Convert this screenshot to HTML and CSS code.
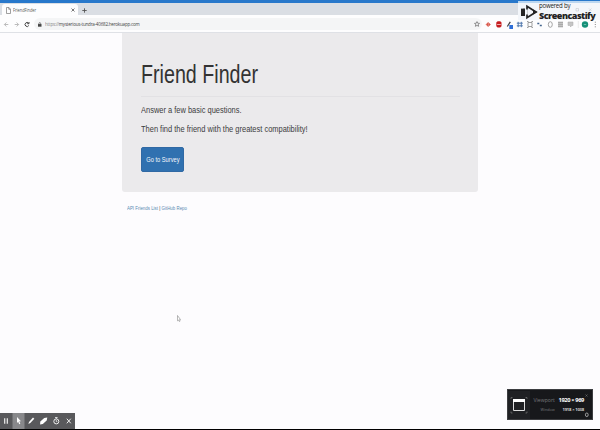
FILE: index.html
```html
<!DOCTYPE html>
<html lang="en">
<head>
<meta charset="utf-8">
<title>FriendFinder</title>
<link rel="stylesheet" href="styles.css">
</head>
<body>
<header class="browser">
  <div class="tabs">
    <div class="tab">
      <svg class="file" viewBox="0 0 5 7"><path d="M.5.5h2.400l1.600 1.700v4.300h-4zM2.800.5v1.800h1.700" /></svg>
      <span class="tab-title">FriendFinder</span>
      <svg class="close" viewBox="0 0 4 4"><path d="M.5.5l3 3m0-3l-3 3"/></svg>
    </div>
    <svg class="plus" viewBox="0 0 5 5"><path d="M2.500.3v4.400M.3 2.500h4.400"/></svg>
  </div>
  <div class="toolbar">
    <svg class="nav" viewBox="0 0 32 9">
      <path class="dim" d="M8.300 4.500H4.600m1.800-2l-2 2 2 2M14.700 4.500h3.700m-1.800-2l2 2-2 2"/>
      <path class="dark" d="M28.600 3.200a2 2 0 1 0 .2 2.300M29 2v1.700h-1.800"/>
    </svg>
    <div class="address">
      <svg class="lock" viewBox="0 0 4 5"><path d="M0 2h4v3H0z"/><path class="shackle" d="M1 2V1.200a1 .8 0 0 1 2 0V2"/></svg>
      <span class="url"><span class="scheme">https://</span>mysterious-tundra-40682.herokuapp.com</span>
      <svg class="star" viewBox="0 0 6 6"><path d="M3 .6l.7 1.600 1.800.2-1.300 1.100.4 1.800L3 4.400l-1.600.9.4-1.800L.5 2.400l1.800-.2z"/></svg>
    </div>
    <svg class="extensions" viewBox="0 0 118 12">
      <path d="M4 6.500l2-2v4zM8.500 6.500l-2-2v4z" fill="#d8564a" stroke="#d8564a" stroke-width=".4"/>
      <path d="M14.300 4.500l1.300-1.200h2.600l1.300 1.200v3.800l-1.300 1.200h-2.600l-1.300-1.200z" fill="#c51d20"/><path d="M15.100 6.500h3.700" stroke="#f2b3b3"/>
      <path d="M25.300 8.500l3-4.700" stroke="#444" stroke-width="1.300"/><path d="M27.300 7h3.700v4h-3.700z" fill="#2f6fd8"/>
      <path d="M36.200 3.800v5.400M39.300 3.800v5.400M34.800 5.200h6M34.800 7.800h6" stroke="#5279ad" fill="none"/>
      <path d="M46 4.500h4v4h-4zM45 3.500h1.500M49.500 3.500H51M45 9.500h1.500M49.500 9.500H51" stroke="#888" stroke-width=".8" fill="none"/>
      <path d="M55.300 5.500h2M57.800 7.500h2" stroke="#43648c" stroke-width="1.500"/>
      <ellipse cx="68.300" cy="6.500" rx="2" ry="2.800" stroke="#999" stroke-width=".9" fill="none"/>
      <path d="M76 3.700h5v5.600h-5z" fill="#aaa"/><path d="M76 5.500h5M76 7.500h5" stroke="#ddd" stroke-width=".5"/>
      <path d="M86 4h5v3.500h-2v1.500l-1.500-1.500H86z" fill="#c5c5c5" stroke="#aaa" stroke-width=".5"/>
      <path d="M96.300 3v7" stroke="#ddd" stroke-width=".6"/>
      <circle cx="103" cy="6.500" r="3.200" fill="#159078"/><path d="M101.800 6.500h2.400" stroke="#8ed2c5" stroke-width=".7"/>
      <path d="M113.300 3.700v1M113.300 6v1M113.300 8.300v1" stroke="#888"/>
    </svg>
  </div>
  <div class="watermark">
    <svg class="logo" viewBox="0 0 18 16"><path d="M1 4.500h4v7.500H1z" fill="#252525"/><path d="M7 2.300l9 5.700-9 5.700z" fill="none" stroke="#252525" stroke-width="1.700"/><path d="M0 3.300h3v1H0zM0 12.200h3v1H0zM6 5.500h1.800v5H6z" fill="#f3f6fa"/><path d="M13 5.500L17.500 8 13 10.500z" fill="#222"/></svg>
    <div class="brand"><span class="powered">powered by</span><span class="name">Screencastify</span></div>
    <svg class="window-controls" viewBox="0 0 18 4"><path d="M1 .5h2.500V3H1zM14 .5L16.500 3m0-2.500L14 3"/></svg>
  </div>
</header>
<main>
  <section class="jumbotron">
    <h1><span class="narrow">Friend Finder</span></h1>
    <hr>
    <p><span class="narrow">Answer a few basic questions.</span></p>
    <p><span class="narrow">Then find the friend with the greatest compatibility!</span></p>
    <a class="button"><span>Go to Survey</span></a>
  </section>
  <footer><span class="links"><a>API Friends List</a> | <a>GitHub Repo</a></span></footer>
</main>
<svg class="cursor" viewBox="0 0 4 7"><path d="M.5.5v5.300l1-.8.800 1.500.800-.4-.6-1.500h1z"/></svg>
<div class="recorder">
  <svg viewBox="0 0 75 16">
    <path d="M12.500 0h12v16h-12z" fill="#88888b"/>
    <path d="M4.700 5.300v5.400M7.300 5.300v5.400" stroke="#eee" stroke-width="1.200"/>
    <path d="M17 4l4 4.200-1.700.1 1 2.500-1.100.5-1-2.500L17 10z" fill="#fff"/>
    <path d="M28.400 10.900l.6-2 4-4.300 1.300 1.200-4 4.300z" fill="#fff"/>
    <path d="M40.300 8.500l4-3.500 3-.5-.6 3-3.900 3.500-2.700.5z" fill="#fff"/>
    <circle cx="56.300" cy="8.400" r="2.500" fill="none" stroke="#eee"/><path d="M55 4.500h2.600M56.300 4.500v1.500M56.300 7v1.600h1" fill="none" stroke="#eee" stroke-width=".8"/>
    <path d="M66.800 5.700l4 4.600m0-4.600l-4 4.600" stroke="#eee"/>
  </svg>
</div>
<div class="viewport">
  <div class="preview"><svg viewBox="0 0 22 28"><path d="M5.500 8.500h11v11h-11z" fill="none" stroke="#ddd"/><path d="M5 8h12v3H5z" fill="#fff"/><path d="M3 8V6.500h1.500M17.500 6.500H19V8M3 20.500V22h1.500M17.500 22H19v-1.500" fill="none" stroke="#777" stroke-width=".7"/></svg></div>
  <dl>
    <dt>Viewport</dt><dd>1920 × 969</dd>
    <dt class="small">Window</dt><dd class="small">1918 × 1038</dd>
  </dl>
  <svg class="controls" viewBox="0 0 6 28"><path d="M1.500 3.500l2 2m0-2l-2 2" stroke="#777" stroke-width=".6"/><ellipse cx="2.800" cy="23.800" rx="1.400" ry="1.800" stroke="#bbb" stroke-width=".8" fill="none"/></svg>
</div>
<div class="edge"></div>
</body>
</html>
```
FILE: styles.css
```css
* { box-sizing: border-box; }
body { margin: 0; width: 600px; height: 430px; overflow: hidden; position: relative; background: #fdfcfe; font-family: "Liberation Sans", Arial, sans-serif; color: #333; }
svg { display: block; flex: none; }
.browser { height: 33px; position: relative; border-bottom: 1px solid #dfe1e6; }
.tabs { height: 15px; padding-top: 4px; background: linear-gradient(#2878cb 3px, #dadee4 3px); display: flex; }
.tab { width: 76px; margin-left: 2px; height: 11px; background: #fdfdfe; border-radius: 3px 3px 0 0; display: flex; align-items: center; padding: 1px 3px 0 4px; }
.file { width: 5px; height: 7px; fill: none; stroke: #777; stroke-width: .7; }
.tab-title { font: 5px "Open Sans", sans-serif; margin-left: 2px; flex: 1; color: #555; white-space: nowrap; transform: scaleX(.78); transform-origin: left; }
.close { width: 4px; height: 4px; stroke: #555; stroke-width: .8; }
.plus { width: 5px; height: 5px; margin: 4px 0 0 4px; stroke: #555; stroke-width: .9; }
.toolbar { height: 17px; padding-top: 1px; display: flex; align-items: center; background: #fdfdfe; }
.nav { width: 32px; height: 9px; fill: none; stroke-width: .8; }
.dim { stroke: #aaa; }
.dark { stroke: #444; stroke-width: 1; }
.address { width: 448px; height: 12px; border-radius: 6px; margin-left: 2px; background: #f4f5f6; display: flex; align-items: center; padding: 0 2px 0 4px; }
.lock { width: 3.500px; height: 5px; fill: #444; }
.shackle { fill: none; stroke: #444; stroke-width: .7; }
.url { font: 5.500px "Open Sans", sans-serif; margin-left: 3px; flex: 1; color: #444; letter-spacing: -.25px; white-space: nowrap; transform: scaleX(.825); transform-origin: left; }
.scheme { color: #888; }
.star { width: 6px; height: 6px; fill: none; stroke: #666; stroke-width: .7; }
.extensions { width: 118px; height: 12px; }
.watermark { position: absolute; left: 518px; top: 1px; width: 82px; height: 19px; background: linear-gradient(#bcd7f0 2px, #f3f6fa 2px); display: flex; align-items: center; }
.logo { width: 18px; height: 16px; margin: 2px 0 0 2px; }
.brand { width: 58px; font-family: "Open Sans", sans-serif; margin-left: 1px; color: #222; white-space: nowrap; }
.powered, .name { display: block; transform-origin: left; }
.powered { width: 31px; height: 9px; font-size: 6.300px; line-height: 9px; transform: scaleX(.97); letter-spacing: -.25px; }
.name { height: 11px; font-size: 9px; line-height: 11px; font-weight: 800; letter-spacing: -.5px; }
.window-controls { position: absolute; left: 57px; top: 7px; width: 18px; height: 4px; fill: none; stroke: #bfc2c7; stroke-width: .5; }
.jumbotron { width: 356px; height: 159px; margin-left: 122px; padding: 24px 18px 0 19px; background: #ebeaec; border-radius: 0 0 3px 3px; }
.narrow { display: inline-block; transform: scaleX(.757); transform-origin: left; white-space: nowrap; }
h1 { margin: 0; font-size: 26px; line-height: 34px; font-weight: 400; }
hr { margin: 5px 0 0; border: 0; height: 1px; background: #e2e1e4; }
p { margin: 0 0 5px; font-size: 9.900px; line-height: 14px; color: #3c3b3d; }
hr + p { margin-top: 6px; }
.button { display: flex; align-items: center; justify-content: center; width: 43px; height: 25px; margin-top: 11px; background: #3071b0; border: .5px solid #3069a4; border-radius: 2px; color: #f4f8fc; font-size: 7.500px; white-space: nowrap; }
.button span { transform: scaleX(.76); }
footer { padding: 12px 0 0 127px; font-size: 5.600px; line-height: 8px; }
.links { display: inline-block; transform: scaleX(.785); transform-origin: left; white-space: nowrap; }
footer a { color: #5b8bb2; }
.cursor { position: absolute; left: 177px; top: 315px; width: 4px; height: 7px; fill: #fff; stroke: #888; stroke-width: .6; }
.recorder { position: absolute; left: 0; top: 413px; width: 75px; height: 16px; background: #59595c; }
.viewport { position: absolute; left: 507px; top: 389px; width: 86px; height: 31px; border: 1px solid #3c3d40; background: #17181b; display: flex; align-items: center; }
.preview { width: 22px; height: 28px; background: #202124; }
.preview svg { width: 22px; height: 28px; }
dl { margin: 0; width: 54px; display: grid; grid-template-columns: 24px 28px; grid-template-rows: 9px 9px; row-gap: 1px; justify-content: end; align-items: center; font: 5.700px "Open Sans", sans-serif; text-align: right; white-space: nowrap; }
dt { color: #77787b; transform: scaleX(.9); }
dd { margin: 0; color: #fff; font-weight: 700; letter-spacing: -.35px; }
dl .small { font-size: 4.200px; }
dd.small { letter-spacing: -.2px; color: #ccc; }
.controls { width: 6px; height: 28px; }
.edge { position: absolute; left: 0; bottom: 0; width: 600px; height: 1px; background: #000; }
```
